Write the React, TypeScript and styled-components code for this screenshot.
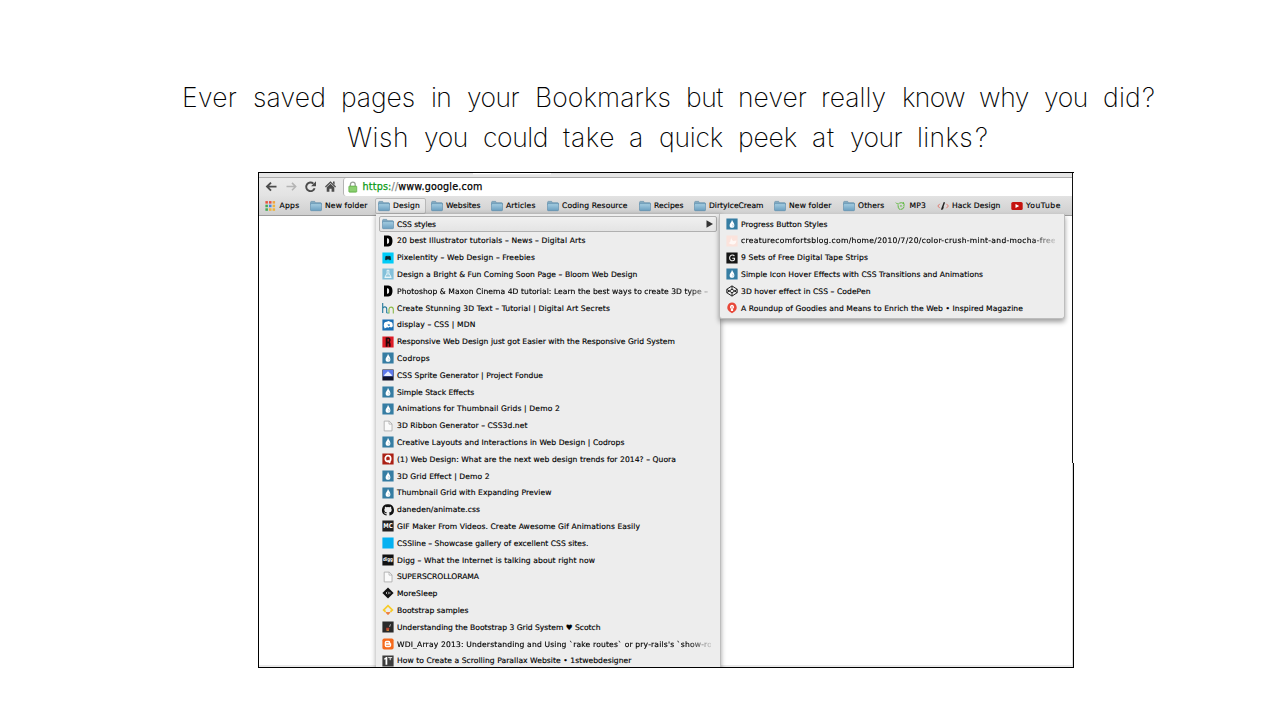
import React, { useLayoutEffect, useRef, useState } from 'react';
import styled, { createGlobalStyle } from 'styled-components';

const GlobalStyle = createGlobalStyle`
  * { box-sizing: border-box; }
  body { margin: 0; background: #fff; overflow: hidden; }
`;

const Page = styled.main`
  width: 1280px;
  height: 702px;
  padding: 77px 0 0 180px;
  overflow: hidden;
  font-family: 'DejaVu Sans', 'Noto Sans', sans-serif;
  color: #000;
`;

const Headline = styled.h1`
  display: flex;
  flex-direction: column;
  margin: 0 0 15px;
  font: 200 26.5px/40px Inter, Roboto, sans-serif;
`;

const HeadlineRow = styled.div<{ $indent: number }>`
  display: flex;
  padding-left: ${(p) => p.$indent}px;
  white-space: pre;
`;

const Word = styled.span<{ $w: number }>`
  flex: none;
  width: ${(p) => p.$w}px;
`;

const Frame = styled.section`
  position: relative;
  display: flex;
  width: 816px;
  height: 496px;
  margin-left: 78px;
  border: solid #000;
  border-width: 1px 0 1px 1px;
  overflow: hidden;
`;

const Window = styled.div`
  flex: 1;
  min-width: 0;
  display: flex;
  flex-direction: column;
`;

const Edge = styled.div`
  width: 2px;
  display: flex;
  flex-direction: column;
  z-index: 3;
`;

const EdgeUpper = styled.div`
  height: 290px;
  border-left: 1px solid #111;
  background: #fff;
`;

const EdgeLower = styled.div`
  flex: 1;
  border-right: 1px solid #000;
  background: #dadada;
`;

const TabStrip = styled.div`
  height: 5px;
  padding-left: 214px;
  background: #e6e6e6;
  border-bottom: 1px solid #adadad;
`;

const TabShadow = styled.div`
  width: 78px;
  height: 2px;
  border-top: 1px solid #fff;
  background: #ededed;
`;

const Toolbar = styled.div`
  display: flex;
  align-items: center;
  height: 18px;
  padding-left: 6px;
  background: linear-gradient(#ebebeb, #e3e3e3);
`;

const NavButton = styled.span<{ $w: number }>`
  width: ${(p) => p.$w}px;
  height: 14px;
  svg { display: block; }
`;

const AddressBar = styled.div`
  flex: 1;
  display: flex;
  align-items: center;
  height: 18px;
  padding-left: 4px;
  border: 1px solid #b4b4b4;
  border-width: 0 0 0 1px;
  border-radius: 3px 0 0 3px;
  background: #fff;
  font-size: 9.6px;
  line-height: 18px;
  -webkit-text-stroke: 0.25px;
`;

const Lock = styled.span`
  width: 14.5px;
  height: 12px;
  svg { display: block; }
`;

const Scheme = styled.span`
  color: #0a9a14;
`;

const Slashes = styled.span`
  color: #888;
`;

const BookmarkBar = styled.div`
  display: flex;
  align-items: center;
  height: 20px;
  padding-left: 6px;
  background: linear-gradient(#e2e2e2, #cfcfcf);
  border-bottom: 1px solid #9c9c9c;
`;

const Bookmark = styled.div<{ $w: number; $active?: boolean }>`
  display: flex;
  align-items: center;
  gap: ${(p) => (p.$w < 46 ? 2.5 : 3)}px;
  flex: none;
  width: ${(p) => p.$w}px;
  height: 16px;
  font-size: 7.6px;
  line-height: 16px;
  ${(p) =>
    p.$active &&
    `width: 51px; margin: 0 5px 0 -3px; padding-left: 2px; border: 1px solid #b8b8b8; border-radius: 2px;
     background: linear-gradient(#ededed, #e2e2e2);`}
`;

const Viewport = styled.div`
  flex: 1;
  border-bottom: 2px solid #e9e9e9;
  background: #fff;
`;

const Menu = styled.div<{ $sub?: boolean }>`
  position: absolute;
  z-index: ${(p) => (p.$sub ? 2 : 1)};
  left: ${(p) => (p.$sub ? 460 : 117)}px;
  top: 41px;
  width: ${(p) => (p.$sub ? 346 : 345)}px;
  height: ${(p) => (p.$sub ? '105px' : '470px')};
  padding: 1.6px 3px 0;
  background: #ededed;
  border: 1px solid #bdbdbd;
  border-width: ${(p) => (p.$sub ? '0 1px 1px' : '0 1px 0 0')};
  border-radius: ${(p) => (p.$sub ? '0 0 3px 3px' : '0')};
  box-shadow: 0 ${(p) => (p.$sub ? 3 : 1)}px 5px rgba(0, 0, 0, 0.38);
`;

const Row = styled.div<{ $selected?: boolean }>`
  display: flex;
  align-items: center;
  gap: 3px;
  height: 16.81px;
  padding-left: 3px;
  font-size: 7.6px;
  line-height: 16px;
  ${(p) =>
    p.$selected &&
    `height: 15.4px; margin: 0.7px 0; padding: 0 3px 0 2px; border: 1px solid #b0b0b0; border-radius: 2px;
     background: linear-gradient(#f0f0f0, #e4e4e4);`}
`;

const Icon = styled.span`
  flex: none;
  width: 12px;
  height: 12px;
  svg { display: block; overflow: visible; }
`;

const Label = styled.span<{ $fade?: boolean }>`
  flex: none;
  padding-top: 1.3px;
  white-space: pre;
  -webkit-text-stroke: 0.15px;
  ${(p) =>
    p.$fade &&
    `width: 314px; overflow: hidden;
     mask-image: linear-gradient(to right, #000 290px, transparent 318px);`}
`;

const Spacer = styled.span`
  flex: 1;
`;

/* Tracks its text so that it fills the given number of pixels. */
function Fit({ w, children }: { w: number; children: React.ReactNode }) {
  const ref = useRef<HTMLSpanElement>(null);
  const [spacing, setSpacing] = useState(0);
  useLayoutEffect(() => {
    const el = ref.current;
    if (!el) return;
    const n = (el.textContent || '').length;
    setSpacing((w - el.getBoundingClientRect().width) / n);
  }, [w]);
  return (
    <span ref={ref} style={{ letterSpacing: spacing, whiteSpace: 'pre' }}>
      {children}
    </span>
  );
}

const Tile = ({ fill, children }: { fill: string; children?: React.ReactNode }) => (
  <svg width="12" height="12" viewBox="0 0 12 12">
    <rect x="0.4" y="0.5" width="11.2" height="11" fill={fill} />
    {children}
  </svg>
);

const glyph = (size: number, fill = '#fff') => ({
  fontSize: size,
  fontWeight: 700,
  fill,
  textAnchor: 'middle' as const,
  letterSpacing: 0,
});

const icons: Record<string, React.ReactNode> = {
  folder: (
    <svg width="12" height="12" viewBox="0 0 12 12">
      <defs>
        <linearGradient id="fold" x1="0" y1="0" x2="0" y2="1">
          <stop offset="0" stopColor="#a5cde2" />
          <stop offset="1" stopColor="#6b9fc0" />
        </linearGradient>
      </defs>
      <path d="M.6 2.300q0-.9.8-.9h3q.6 0 .8.8l.2.500h5.200q.8 0 .8.8v1H.6z" fill="#82a9c0" stroke="#5b89a6" strokeWidth=".6" />
      <path d="M.5 3.600h11v6.400q0 .7-.7.7H1.200q-.7 0-.7-.7z" fill="url(#fold)" stroke="#5a8cab" strokeWidth=".6" />
    </svg>
  ),
  drop: (
    <Tile fill="#367da3">
      <path d="M6 1.800C6.300 3.700 8.400 5 8.400 7.200A2.400 2.600 0 0 1 3.600 7.200C3.600 5.600 5.700 4.300 6 1.800z" fill="#fff" />
      <path d="M6.500 6.200q1.100 1.200.3 2.300" fill="none" stroke="#9cc4d8" strokeWidth=".8" />
    </Tile>
  ),
  d: (
    <svg width="12" height="12" viewBox="0 0 12 12">
      <path fillRule="evenodd" d="M2 .5h4.400Q10.500.8 10.500 6t-4.100 5.500H2zM5 3.300v5.400h.8q1.400-.2 1.400-2.700T5.800 3.300z" fill="#000" />
    </svg>
  ),
  pixel: (
    <Tile fill="#00ccf8">
      <path d="M3 5l1.300-1.200.9.800L6 3.500l.8 1.100.9-.8L9 5l-.6.900.8 1-1.200 1.700-.9-1H4.900l-.9 1L2.800 6.900l.8-1z" fill="#0c262e" />
    </Tile>
  ),
  bloom: (
    <Tile fill="#83c0da">
      <path d="M5 2.300h2L6.800 5l2.200 4H3l2.200-4z M6 5.200v2.200M2.500 9.500h7" fill="none" stroke="#eef8fb" strokeWidth=".9" />
    </Tile>
  ),
  hn: (
    <svg width="12" height="12" viewBox="0 0 12 12" fill="none">
      <path d="M.7 1v10M.7 6.500q.6-1.600 2-1.600 2 0 2 2V11" stroke="#21789a" strokeWidth="1.100" />
      <path d="M7 11.500V7q.4-1.900 2.200-1.900 2.100 0 2.100 2.400v4" stroke="#8ab848" strokeWidth="1.100" />
      <path d="M4.700 11h2" stroke="#3ca0a6" strokeWidth="1" />
    </svg>
  ),
  mdn: (
    <Tile fill="#1b6fb4">
      <path d="M2 4.500Q2.600 2.300 5 2.700q1.500-1.200 3 0 2.700 0 2.600 2.800.8 2.400-1.500 3l-1.600-.7-1 .9-1.400-.5-2.400 1.300Q1.200 6.500 2 4.500z" fill="#fff" />
      <path d="M5.400 5.300h2.400v1.600H6.200z" fill="#4a90c8" />
    </Tile>
  ),
  rwd: (
    <Tile fill="#dd1b26">
      <path fillRule="evenodd" d="M3.700 1.500h3.100q1.800.1 1.800 2.400 0 1.600-.9 2.100.9.600.9 2v2.700H6.700V7.400H5.600v3.300H3.700zM5.600 3.100v2.400h1.100V3.100z" fill="#240608" />
    </Tile>
  ),
  sprite: (
    <Tile fill="#10122a">
      <rect x=".8" y="1" width="10.400" height="6.400" fill="#5d78ec" />
      <path d="M6 2.300L7.800 4l1.700 1.500.5 1.400H2L2.600 5.500 4.200 4z" fill="#e8ecff" />
    </Tile>
  ),
  page: (
    <svg width="12" height="12" viewBox="0 0 12 12">
      <path d="M2.200 1.100h5L10 3.900v7H2.200z" fill="#fafafa" stroke="#a6a6a6" strokeWidth=".8" />
      <path d="M7 1.100v3h3" fill="none" stroke="#a6a6a6" strokeWidth=".7" />
    </svg>
  ),
  quora: (
    <Tile fill="#ab2015">
      <ellipse cx="6" cy="5.700" rx="2.700" ry="3" fill="none" stroke="#fff" strokeWidth="1.700" />
      <path d="M5.600 7.200l2.600 2.800" stroke="#fff" strokeWidth="1.400" />
    </Tile>
  ),
  github: (
    <svg width="12" height="12" viewBox="0 0 16 16">
      <path
        fill="#111"
        d="M8 .4a7.600 7.600 0 0 0-2.500 14.900c.4.100.5-.2.500-.4v-1.500c-2.100.5-2.600-1-2.600-1-.3-.8-.8-1-.8-1-.7-.5.100-.5.100-.5.700.100 1.100.8 1.100.8.700 1.100 1.800.8 2.300.6.100-.5.300-.8.500-1-1.700-.2-3.500-.8-3.500-3.700 0-.8.300-1.500.8-2-.1-.2-.3-1 .1-2 0 0 .6-.2 2.100.8a7.200 7.200 0 0 1 3.800 0c1.500-1 2.100-.8 2.100-.8.4 1 .2 1.800.1 2 .5.500.8 1.200.8 2 0 2.900-1.800 3.500-3.500 3.700.3.200.5.700.5 1.400v2.200c0 .2.100.5.500.4A7.600 7.600 0 0 0 8 .4z"
      />
    </svg>
  ),
  gif: (
    <Tile fill="#222">
      <text x="6" y="8.400" {...glyph(6.6)} textLength="9.400" lengthAdjust="spacingAndGlyphs">MC</text>
    </Tile>
  ),
  cssline: <Tile fill="#05b1f1" />,
  digg: (
    <Tile fill="#111">
      <text x="6" y="7.400" {...glyph(5.2)} textLength="10" lengthAdjust="spacingAndGlyphs">digg</text>
    </Tile>
  ),
  sleep: (
    <svg width="12" height="12" viewBox="0 0 12 12">
      <path d="M6 .4L11.600 6 6 11.600.4 6z" fill="#111" />
      <path d="M5.200 4.900L4 6l1.200 1.100M6.800 4.800v2.400M8 5.400v1.200" fill="none" stroke="#ddd" strokeWidth=".8" />
    </svg>
  ),
  boot: (
    <svg width="12" height="12" viewBox="0 0 12 12" fill="none" strokeWidth="1.800">
      <path d="M3.600 7.800L1.700 5.900 6 1.700l4.300 4.200-1.900 1.900" stroke="#f6cb2a" />
      <path d="M4 8.500h4L6 10.700z" fill="#ee7c33" stroke="#ee7c33" strokeWidth=".8" />
    </svg>
  ),
  scotch: (
    <Tile fill="#2a2a2a">
      <path d="M4.200 9.400V6.800h3.200l-.5 2.600z" fill="#b5412f" />
      <path d="M7.200 5.600l1-2.600.6.400-.8 2.600z" fill="#ccc" />
      <path d="M4.700 9.300h2.300" stroke="#e7a33a" strokeWidth=".8" />
    </Tile>
  ),
  blogger: (
    <svg width="12" height="12" viewBox="0 0 12 12">
      <rect x=".4" y=".4" width="11.200" height="11.200" rx="1.800" fill="#f56a1c" />
      <path d="M4.500 2.700h2.300q1.500.2 1.500 2 .1.700.9.800v2q-.1 1.800-2 1.800H4.500q-1.800-.1-1.800-1.800V4.500q.1-1.800 1.800-1.800z" fill="#fff" />
      <path d="M4.500 4.700h1.800M4.500 7.300h2.900" stroke="#f56a1c" strokeWidth=".9" strokeLinecap="round" />
    </svg>
  ),
  first: (
    <Tile fill="#3d3d3d">
      <path d="M2.300 3.300l2-1.200h1v7.600H3.500V4.200l-1.200.5z" fill="#fff" />
      <path d="M6.200 2.600h4M8.200 2.600v2.600" stroke="#eee" strokeWidth="1" />
    </Tile>
  ),
  peach: (
    <Tile fill="#fbe3dc">
      <path d="M5.500 1.800q-.6 3 1.800 4.200l3.200-.6q-.5 4-3.500 4-3-.3-4.500-1.500 2-.4 2-2.500z" fill="#fff8f5" />
    </Tile>
  ),
  g: (
    <Tile fill="#161616">
      <path d="M8.400 4.100A2.700 2.900 0 1 0 8.500 7.600V6.200H6.300" fill="none" stroke="#eee" strokeWidth="1.100" />
    </Tile>
  ),
  codepen: (
    <svg width="12" height="12" viewBox="0 0 12 12" fill="none" stroke="#222" strokeWidth="1" strokeLinejoin="round">
      <path d="M6 .9l5.200 3.400v3.400L6 11.100.8 7.700V4.300zM6 .9v3.300M6 7.800v3.300M.8 4.300L6 7.800l5.200-3.500M.8 7.700L6 4.200l5.200 3.500" />
    </svg>
  ),
  inspired: (
    <svg width="12" height="12" viewBox="0 0 12 12">
      <path d="M6 .6a4.900 4.900 0 0 1 2.300 9.100L6 11.300 3.700 9.700A4.900 4.900 0 0 1 6 .6z" fill="#e8483a" />
      <path d="M6 2.800a2.200 2.200 0 0 1 1.100 4V9H4.900V6.800a2.200 2.200 0 0 1 1.100-4z" fill="#fff" />
      <path d="M6 4.200v2.500" stroke="#e8483a" strokeWidth=".7" />
    </svg>
  ),
  apps: (
    <svg width="12" height="12" viewBox="0 0 12 12">
      {['#e8503c', '#e8503c', '#f0a43a', '#43a852', '#4483e0', '#f0b23a', '#43a852', '#f0b23a', '#f0b23a'].map((c, i) => (
        <rect key={i} x={0.4 + (i % 3) * 3.6} y={1.1 + Math.floor(i / 3) * 3.6} width="2.500" height="2.500" fill={c} />
      ))}
    </svg>
  ),
  mp3: (
    <svg width="12" height="12" viewBox="0 0 12 12" fill="none" stroke="#5cb83c" strokeWidth="1">
      <path d="M.9 2.600q1 1.800 3 1.400M4.200 3.200Q6.200 2 8.800 3.600M8 2q1.800 2.200.8 4.400M9.200 6.800Q8 9.600 5.600 9.400M3 5.200Q2.800 8 5 9.800M5 6q1.600-.6 2.200.6" />
    </svg>
  ),
  hack: (
    <svg width="12" height="12" viewBox="0 0 12 12" fill="none">
      <path d="M2.800 3.800L.8 6l2 2.200M9.400 3.800l2 2.200-2 2.200" stroke="#e07b70" strokeWidth="1" />
      <path d="M4.600 9.800L7.400 2.200M6.200 6.500L5.400 9" stroke="#222" strokeWidth="1.400" />
    </svg>
  ),
  youtube: (
    <svg width="12" height="12" viewBox="0 0 12 12">
      <rect x=".3" y="1.900" width="11.400" height="8.200" rx="1.600" fill="#c5130f" />
      <path d="M4.500 3.900L8.200 6 4.500 8.100z" fill="#fff" />
    </svg>
  ),
};

type BarItem = [icon: string, text: string, slot: number, textWidth: number];
const bar: BarItem[] = [
  ['apps', 'Apps', 45, 20],
  ['folder', 'New folder', 68, 42.5],
  ['folder', 'Design', 53, 27],
  ['folder', 'Websites', 60, 34.5],
  ['folder', 'Articles', 56, 29.5],
  ['folder', 'Coding Resource', 92, 65.5],
  ['folder', 'Recipes', 55, 29.5],
  ['folder', 'DirtyIceCream', 80, 54.5],
  ['folder', 'New folder', 69, 42.5],
  ['folder', 'Others', 52, 26.5],
  ['mp3', 'MP3', 42, 16.5],
  ['hack', 'Hack Design', 74, 48.5],
  ['youtube', 'YouTube', 50, 35],
];

type Item = [icon: string, text: string, width: number, fade?: boolean];
const mainMenu: Item[] = [
  ['folder', 'CSS styles', 39],
  ['d', '20 best Illustrator tutorials – News – Digital Arts', 188.5],
  ['pixel', 'Pixelentity – Web Design – Freebies', 138],
  ['bloom', 'Design a Bright & Fun Coming Soon Page – Bloom Web Design', 240.5],
  ['d', 'Photoshop & Maxon Cinema 4D tutorial: Learn the best ways to create 3D type –', 311, true],
  ['hn', 'Create Stunning 3D Text – Tutorial | Digital Art Secrets', 213],
  ['mdn', 'display – CSS | MDN', 78.5],
  ['rwd', 'Responsive Web Design just got Easier with the Responsive Grid System', 278],
  ['drop', 'Codrops', 33],
  ['sprite', 'CSS Sprite Generator | Project Fondue', 146],
  ['drop', 'Simple Stack Effects', 77],
  ['drop', 'Animations for Thumbnail Grids | Demo 2', 163],
  ['page', '3D Ribbon Generator – CSS3d.net', 130.5],
  ['drop', 'Creative Layouts and Interactions in Web Design | Codrops', 227.5],
  ['quora', '(1) Web Design: What are the next web design trends for 2014? – Quora', 279],
  ['drop', '3D Grid Effect | Demo 2', 92.5],
  ['drop', 'Thumbnail Grid with Expanding Preview', 154.5],
  ['github', 'daneden/animate.css', 83],
  ['gif', 'GIF Maker From Videos. Create Awesome Gif Animations Easily', 243],
  ['cssline', 'CSSline – Showcase gallery of excellent CSS sites.', 191.5],
  ['digg', 'Digg – What the Internet is talking about right now', 198],
  ['page', 'SUPERSCROLLORAMA', 82],
  ['sleep', 'MoreSleep', 40.5],
  ['boot', 'Bootstrap samples', 71.5],
  ['scotch', 'Understanding the Bootstrap 3 Grid System ♥ Scotch', 203.5],
  ['blogger', "WDI_Array 2013: Understanding and Using `rake routes` or pry-rails's `show-ro", 315, true],
  ['first', 'How to Create a Scrolling Parallax Website • 1stwebdesigner', 234.5],
];

const subMenu: Item[] = [
  ['drop', 'Progress Button Styles', 86.5],
  ['peach', 'creaturecomfortsblog.com/home/2010/7/20/color-crush-mint-and-mocha-free', 315, true],
  ['g', '9 Sets of Free Digital Tape Strips', 127],
  ['drop', 'Simple Icon Hover Effects with CSS Transitions and Animations', 242],
  ['codepen', '3D hover effect in CSS – CodePen', 129.5],
  ['inspired', 'A Roundup of Goodies and Means to Enrich the Web • Inspired Magazine', 282],
];

/* [word, distance to the next word, width of the word] */
type HeadWord = [string, number, number];
const lineOne: HeadWord[] = [
  ['Ever', 71, 55],
  ['saved', 88, 73],
  ['pages', 90, 74],
  ['in', 36, 20],
  ['your', 68, 52],
  ['Bookmarks', 151, 136],
  ['but', 52, 37],
  ['never', 83, 69],
  ['really', 81, 65],
  ['know', 77, 63],
  ['why', 65, 50],
  ['you', 59, 44],
  ['did', 39, 38],
  ['?', 16, 15],
];
const lineTwo: HeadWord[] = [
  ['Wish', 77, 62],
  ['you', 59, 44],
  ['could', 80, 65],
  ['take', 66, 52],
  ['a', 30, 15],
  ['quick', 79, 64],
  ['peek', 74, 59],
  ['at', 38, 23],
  ['your', 67, 52],
  ['links', 58, 56],
  ['?', 16, 15],
];

function HeadlineLine({ words, indent }: { words: HeadWord[]; indent: number }) {
  return (
    <HeadlineRow $indent={indent}>
      {words.map(([word, slot, width], i) => (
        <Word key={i} $w={slot}>
          <Fit w={width}>{word}</Fit>
          {i < words.length - 2 ? ' ' : ''}
        </Word>
      ))}
    </HeadlineRow>
  );
}

function MenuRow({ item, selected }: { item: Item; selected?: boolean }) {
  const [icon, text, width, fade] = item;
  return (
    <Row $selected={selected}>
      <Icon>{icons[icon]}</Icon>
      <Label $fade={fade}>
        <Fit w={width}>{text}</Fit>
      </Label>
      {selected && (
        <>
          <Spacer />
          <svg width="7" height="8" viewBox="0 0 7 8">
            <path d="M.5.2L7 4 .5 7.800z" fill="#333" />
          </svg>
        </>
      )}
    </Row>
  );
}

export default function App() {
  return (
    <Page>
      <GlobalStyle />
      <Headline>
        <HeadlineLine words={lineOne} indent={2} />
        <HeadlineLine words={lineTwo} indent={167} />
      </Headline>
      <Frame>
        <Window>
          <TabStrip>
            <TabShadow />
          </TabStrip>
          <Toolbar>
            <NavButton $w={20}>
              <svg width="13" height="14" viewBox="0 0 13 14" fill="none" stroke="#4c4c4c" strokeWidth="1.900">
                <path d="M6 2.600L2 6.600l4 4M2 6.600h9.500" />
              </svg>
            </NavButton>
            <NavButton $w={19}>
              <svg width="13" height="14" viewBox="0 0 13 14" fill="none" stroke="#b4b4b4" strokeWidth="1.500">
                <path d="M7 2.900l3.700 3.700L7 10.300M10.700 6.600H1.500" />
              </svg>
            </NavButton>
            <NavButton $w={20}>
              <svg width="13" height="14" viewBox="0 0 13 14" fill="none" stroke="#4c4c4c" strokeWidth="1.900">
                <path d="M10.600 8.200A4.300 4.300 0 1 1 9.400 3.600" />
                <path d="M12 1.300v4.900H7.100z" fill="#4c4c4c" stroke="none" />
              </svg>
            </NavButton>
            <NavButton $w={19}>
              <svg width="13" height="14" viewBox="0 0 13 14" fill="#4c4c4c">
                <path d="M6.500 1.200L12 6.500l-.8.900L6.500 3.100 1.800 7.400 1 6.500z" />
                <path d="M9 1.500h1.600v3.300L9 3.300z" />
                <path d="M6.500 3.700l3.800 3.600v4.400H7.600v-3H5.400v3H2.700V7.300z" />
              </svg>
            </NavButton>
            <AddressBar>
              <Lock>
                <svg width="10" height="12" viewBox="0 0 10 12">
                  <path d="M2.400 6V3.500a2.400 2.400 0 0 1 4.800 0V6" fill="none" stroke="#9aa29a" strokeWidth="1.300" />
                  <rect x=".8" y="5" width="8" height="6.200" rx=".8" fill="#7fc862" stroke="#5aa745" strokeWidth=".6" />
                  <path d="M1.500 7h6.600M1.500 9h6.600" stroke="#a4dd8c" strokeWidth=".7" />
                </svg>
              </Lock>
              <Fit w={120}>
                <Scheme>https:</Scheme>
                <Slashes>//</Slashes>www.google.com
              </Fit>
            </AddressBar>
          </Toolbar>
          <BookmarkBar>
            {bar.map(([icon, text, slot, width]) => (
              <Bookmark key={text + slot} $w={slot} $active={text === 'Design'}>
                <Icon>{icons[icon]}</Icon>
                <Label>
                  <Fit w={width}>{text}</Fit>
                </Label>
              </Bookmark>
            ))}
          </BookmarkBar>
          <Viewport />
        </Window>
        <Edge>
          <EdgeUpper />
          <EdgeLower />
        </Edge>
        <Menu>
          {mainMenu.map((item, i) => (
            <MenuRow key={i} item={item} selected={i === 0} />
          ))}
        </Menu>
        <Menu $sub>
          {subMenu.map((item, i) => (
            <MenuRow key={i} item={item} />
          ))}
        </Menu>
      </Frame>
    </Page>
  );
}
